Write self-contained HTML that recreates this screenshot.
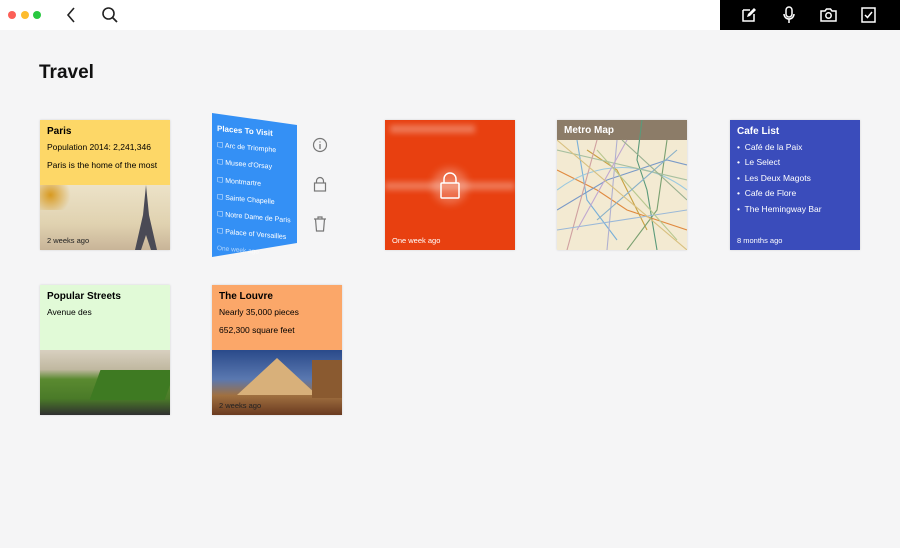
<!DOCTYPE html>
<html><head><meta charset="utf-8"><style>
*{margin:0;padding:0;box-sizing:border-box}
body{width:900px;height:548px;background:#f5f5f6;font-family:"Liberation Sans",sans-serif;position:relative;overflow:hidden}
.top{position:absolute;left:0;top:0;width:900px;height:30px;background:#fff}
.blk{position:absolute;left:720px;top:0;width:180px;height:30px;background:#000}
.dot{position:absolute;top:11px;width:8px;height:8px;border-radius:50%}
h1{position:absolute;left:39px;top:62px;font-size:19px;font-weight:bold;color:#111}
.card{position:absolute;width:130px;height:130px;overflow:hidden;box-shadow:0 0 2px rgba(0,0,0,.15)}
.t{position:absolute;left:7px;font-size:10px;font-weight:bold}
.l{position:absolute;left:7px;font-size:8.5px}
.ts{position:absolute;left:7px;bottom:5px;font-size:7.5px}
</style></head><body>
<div class="top">
<div class="dot" style="left:8px;background:#fc5f57"></div>
<div class="dot" style="left:21px;background:#fdbc2e"></div>
<div class="dot" style="left:33px;background:#28c840"></div>
<svg style="position:absolute;left:64px;top:7px" width="14" height="16"><path d="M10 1L4 8l6 7" stroke="#222" stroke-width="1.6" fill="none"/></svg>
<svg style="position:absolute;left:101px;top:6px" width="18" height="18"><circle cx="7.5" cy="7.5" r="5.5" stroke="#222" stroke-width="1.6" fill="none"/><path d="M11.5 11.5L16 16" stroke="#222" stroke-width="1.8"/></svg>
</div>
<div class="blk">
<svg style="position:absolute;left:21px;top:7px" width="16" height="16"><path d="M2 3h7M2 3v11h11V7" stroke="#fff" stroke-width="1.5" fill="none"/><path d="M6 10l1-3 6-6 2 2-6 6z" fill="#fff"/></svg>
<svg style="position:absolute;left:62px;top:6px" width="14" height="18"><rect x="4" y="1" width="6" height="10" rx="3" stroke="#fff" stroke-width="1.5" fill="none"/><path d="M2 8a5 5 0 0010 0M7 13v4" stroke="#fff" stroke-width="1.5" fill="none"/></svg>
<svg style="position:absolute;left:100px;top:7px" width="17" height="15"><path d="M1 4h4l1.5-2h4L12 4h4v10H1z" stroke="#fff" stroke-width="1.5" fill="none"/><circle cx="8.5" cy="8.5" r="2.7" stroke="#fff" stroke-width="1.5" fill="none"/></svg>
<svg style="position:absolute;left:141px;top:7px" width="15" height="16"><rect x="1" y="1" width="13" height="14" stroke="#fff" stroke-width="1.5" fill="none"/><path d="M4 8l2.5 2.5L11 5" stroke="#fff" stroke-width="1.5" fill="none"/></svg>
</div>
<h1>Travel</h1>

<div class="card" style="left:40px;top:120px;background:#fdd767">
<div class="t" style="top:6px">Paris</div>
<div class="l" style="top:22px">Population 2014: 2,241,346</div>
<div class="l" style="top:40px">Paris is the home of the most</div>
<div style="position:absolute;left:0;top:65px;width:130px;height:65px;background:linear-gradient(180deg,#ece2c8,#e0d2b0 60%,#c8b498)"></div>
<div style="position:absolute;left:0;top:65px;width:35px;height:25px;background:radial-gradient(circle at 30% 40%,#d89a20,transparent 70%)"></div>
<svg style="position:absolute;left:93px;top:65px" width="26" height="65"><path d="M13 0L10 30 2 65h6l5-15 5 15h6L16 30z" fill="#4a4a55"/></svg>
<div class="ts" style="color:#222">2 weeks ago</div>
</div>

<svg style="position:absolute;left:212px;top:113px" width="86" height="145"><polygon points="0,0 85,12 85,130 0,144" fill="#3490f5"/></svg>
<div style="position:absolute;left:217px;top:120px;color:#fff;font-size:7px;line-height:17.2px;transform:skewY(5deg);transform-origin:0 0">
<div style="font-weight:bold;font-size:8px">Places To Visit</div>
<div>☐ Arc de Triomphe</div><div>☐ Musee d'Orsay</div><div>☐ Montmartre</div><div>☐ Sainte Chapelle</div><div>☐ Notre Dame de Paris</div><div>☐ Palace of Versailles</div>
<div style="opacity:.6;font-size:6.5px">One week ago</div></div>
<svg style="position:absolute;left:312px;top:137px" width="16" height="16"><circle cx="8" cy="8" r="6.5" stroke="#777" stroke-width="1.2" fill="none"/><path d="M8 7v5M8 4.5v1" stroke="#777" stroke-width="1.3"/></svg>
<svg style="position:absolute;left:313px;top:176px" width="14" height="16"><path d="M3.5 7V5a3.5 3.5 0 017 0v2" stroke="#777" stroke-width="1.2" fill="none"/><rect x="1.5" y="7" width="11" height="8" stroke="#777" stroke-width="1.2" fill="none"/></svg>
<svg style="position:absolute;left:313px;top:216px" width="14" height="16"><path d="M1 3h12M5 3V1h4v2M2.5 3l1 12h7l1-12" stroke="#777" stroke-width="1.2" fill="none"/></svg>

<div class="card" style="left:385px;top:120px;background:#e84010">
<div style="position:absolute;left:5px;top:5px;width:85px;height:8px;background:rgba(255,255,255,.3);filter:blur(3px)"></div>
<div style="position:absolute;left:0;top:62px;width:130px;height:8px;background:rgba(255,255,255,.3);filter:blur(3px)"></div>
<div style="position:absolute;left:47px;top:48px;width:36px;height:36px;border-radius:50%;background:rgba(255,255,255,.25);filter:blur(4px)"></div>
<svg style="position:absolute;left:55px;top:52px" width="20" height="28"><path d="M4 11V7a6 6 0 0112 0v4" stroke="#fff" stroke-width="1.5" fill="none"/><rect x="1" y="11" width="18" height="15" rx="1" stroke="#fff" stroke-width="1.5" fill="none"/></svg>
<div class="ts" style="color:#fff">One week ago</div>
</div>

<div class="card" style="left:557px;top:120px;background:#f3ead2">
<div style="position:absolute;left:0;top:0;width:130px;height:20px;background:#8c7c68"></div>
<svg style="position:absolute;left:0;top:0" width="130" height="130"><g fill="none" stroke-width="1.1">
<path d="M85 0L80 40 90 70 100 130" stroke="#5a9a7a"/><path d="M0 50L40 70 70 90 130 110" stroke="#e08a40"/><path d="M20 20L30 80 60 120" stroke="#7ab0d8"/><path d="M0 90L50 60 110 40 130 45" stroke="#7a9ac8"/><path d="M30 30L60 50 90 110" stroke="#c8a040"/><path d="M0 70C40 40 90 40 130 70" stroke="#9ac8e0"/><path d="M110 20L100 90 70 130" stroke="#7aa070"/><path d="M60 20L50 130" stroke="#b0b0d0"/>
<path d="M0 30L130 60" stroke="#a8c0a0"/><path d="M10 130L40 20" stroke="#d0a0a0"/><path d="M0 110L130 90" stroke="#9ab8d8"/><path d="M40 30L120 120" stroke="#b8c890"/><path d="M70 20L20 110" stroke="#c0a8d0"/><path d="M120 30L40 100" stroke="#88b0c8"/><path d="M0 20L130 130" stroke="#d8c080"/><path d="M65 20L130 80" stroke="#9ab090"/></g></svg>
<div class="t" style="top:5px;color:#fff">Metro Map</div>
</div>

<div class="card" style="left:730px;top:120px;background:#3a4cbb;color:#fff">
<div class="t" style="top:6px">Cafe List</div>
<div class="l" style="top:22px">•&nbsp; Café de la Paix</div>
<div class="l" style="top:37px">•&nbsp; Le Select</div>
<div class="l" style="top:53px">•&nbsp; Les Deux Magots</div>
<div class="l" style="top:68px">•&nbsp; Cafe de Flore</div>
<div class="l" style="top:84px">•&nbsp; The Hemingway Bar</div>
<div class="ts">8 months ago</div>
</div>

<div class="card" style="left:40px;top:285px;background:#e1fad7">
<div class="t" style="top:6px">Popular Streets</div>
<div class="l" style="top:22px">Avenue des</div>
<div style="position:absolute;left:0;top:65px;width:130px;height:65px;background:linear-gradient(180deg,#d8d0c0 0%,#c0b8a0 30%,#5a8a30 45%,#4a7a28 75%,#303030 100%)"></div>
<div style="position:absolute;left:55px;top:85px;width:75px;height:30px;background:#3e7a22;transform:skewX(-20deg)"></div>
</div>

<div class="card" style="left:212px;top:285px;background:#fba769">
<div class="t" style="top:6px">The Louvre</div>
<div class="l" style="top:22px">Nearly 35,000 pieces</div>
<div class="l" style="top:40px">652,300 square feet</div>
<div style="position:absolute;left:0;top:65px;width:130px;height:65px;background:linear-gradient(180deg,#2a4a8a,#5a78b0 45%,#a07040 70%,#6a3a20)"></div>
<svg style="position:absolute;left:0;top:65px" width="130" height="65"><polygon points="65,8 25,45 105,45" fill="#d8b07a"/><rect x="100" y="10" width="30" height="38" fill="#8a5a30"/></svg>
<div class="ts" style="color:#222">2 weeks ago</div>
</div>
</body></html>
